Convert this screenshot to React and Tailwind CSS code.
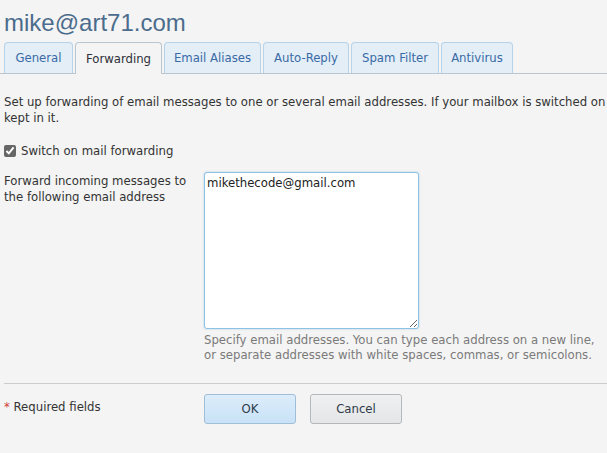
import React from "react";

const font = { fontFamily: '"DejaVu Sans Condensed", "DejaVu Sans", sans-serif' };

function Tab({ label, active, w }) {
  if (active) {
    return (
      <div
        className={`h-[32px] ${w} -mb-px flex items-center justify-center rounded-t-[4px] border border-b-0 border-[#b9c6d0] bg-[#f4f4f4] text-[13px] text-[#2f2f3a]`}
      >
        {label}
      </div>
    );
  }
  return (
    <div
      className={`h-[31px] ${w} flex items-center justify-center rounded-t-[4px] border border-b-0 border-[#b7d3ea] bg-[#e3eef7] text-[13px] text-[#3a6aa6]`}
    >
      {label}
    </div>
  );
}

export default function App() {
  return (
    <div className="w-[607px] h-[453px] overflow-hidden bg-[#f4f4f4]" style={font}>
      <div className="w-[760px]">
        <div
          className="pl-[4px] pt-[9px] h-[42px] text-[24px] leading-[27px] text-[#4b6c8c]"
          style={{ fontFamily: '"Liberation Sans", Arial, sans-serif' }}
        >
          mike@art71.com
        </div>
        <div className="flex items-end gap-[2px] pl-[4px] border-b border-[#b9c6d0] h-[32px]">
          <Tab label="General" w="w-[69px]" />
          <Tab label="Forwarding" active w="w-[87px]" />
          <Tab label="Email Aliases" w="w-[97px]" />
          <Tab label="Auto-Reply" w="w-[86px]" />
          <Tab label="Spam Filter" w="w-[88px]" />
          <Tab label="Antivirus" w="w-[72px]" />
        </div>

        <div className="pl-[4px] pt-[20px] text-[13px] leading-[16px] text-[#333333]">
          <div className="whitespace-nowrap">
            Set up forwarding of email messages to one or several email addresses. If your mailbox is switched on using this form, copies of messages will be
          </div>
          <div>kept in it.</div>
        </div>

        <label className="flex items-center pl-[4px] pt-[18px] h-[32px] text-[13px] text-[#333333]">
          <input type="checkbox" defaultChecked className="w-[12px] h-[12px] m-0 accent-[#666666]" />
          <span className="ml-[5px]">Switch on mail forwarding</span>
        </label>

        <div className="flex pt-[14px]">
          <div className="w-[204px] pl-[4px] pt-[1px] text-[13px] leading-[16px] text-[#333333]">
            Forward incoming messages to
            <br />
            the following email address
          </div>
          <div className="flex flex-col">
            <textarea
              defaultValue="mikethecode@gmail.com"
              spellCheck={false}
              className="w-[215px] h-[157px] rounded-[3px] border border-[#8cc2e3] bg-white px-[2px] py-[2px] text-[13px] leading-[16px] text-[#222222] outline-none shadow-[0_0_2px_rgba(100,170,220,0.5)]"
              style={font}
            />
            <div className="pt-[3px] text-[13px] leading-[15px] text-[#7a7a7a] whitespace-nowrap">
              Specify email addresses. You can type each address on a new line,
              <br />
              or separate addresses with white spaces, commas, or semicolons.
            </div>
          </div>
        </div>

        <div className="mt-[21px] ml-[4px] border-t border-[#cccccc]" />

        <div className="flex pt-[10px]">
          <div className="w-[204px] pl-[4px] pt-[3px] text-[13px] text-[#333333]">
            <span className="text-[#d23c3c]">*</span> Required fields
          </div>
          <div className="flex gap-[14px]">
            <button className="w-[92px] h-[30px] rounded-[3px] border border-[#9fbfd9] bg-gradient-to-b from-[#dcecfa] to-[#c9e2f7] text-[13px] text-[#2f3b4a]">
              OK
            </button>
            <button className="w-[92px] h-[30px] rounded-[3px] border border-[#b3b8bd] bg-gradient-to-b from-[#f0f0f0] to-[#e4e6e8] text-[13px] text-[#2f3b4a]">
              Cancel
            </button>
          </div>
        </div>
      </div>
    </div>
  );
}
